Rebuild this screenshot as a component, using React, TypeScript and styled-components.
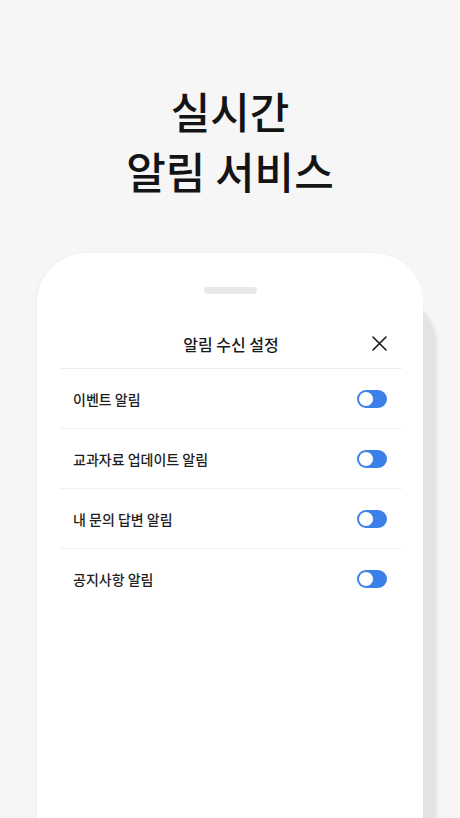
import React from 'react'
import styled, {createGlobalStyle} from 'styled-components'

const GlobalStyle = createGlobalStyle`
  html, body {
    margin: 0;
    padding: 0;
    background: #F6F6F6;
  }
  body {
    font-family: 'Noto Sans CJK KR', 'Noto Sans', sans-serif;
    overflow: hidden;
  }
`

const Background = styled.div`
  width: 460px;
  height: 818px;
  overflow: hidden;
  background: #F6F6F6;
  display: flex;
  flex-direction: column;
  align-items: center;
  padding-top: 80px;
  box-sizing: border-box;
`

const Headline = styled.h1`
  margin: 0;
  font-size: 43px;
  line-height: 60px;
  font-weight: 500;
  color: #141414;
  text-align: center;
  letter-spacing: 0;
`

const Phone = styled.div`
  margin-top: 53px;
  width: 386px;
  height: 640px;
  flex-shrink: 0;
  background: #FFFFFF;
  border-radius: 50px 50px 0 0;
  box-shadow: 14px 42px 3px #E3E3E3, -1px 0 4px rgba(0, 0, 0, 0.03);
  display: flex;
  flex-direction: column;
  align-items: center;
`

const Handle = styled.div`
  margin-top: 34px;
  width: 53px;
  height: 7px;
  border-radius: 4px;
  background: #E8E8E8;
`

const Sheet = styled.div`
  width: 342px;
  margin-top: 25px;
  margin-left: 2px;
  display: flex;
  flex-direction: column;
`

const Header = styled.div`
  height: 49px;
  display: grid;
  grid-template-columns: 1fr auto 1fr;
  align-items: center;
  padding-right: 15px;
  border-bottom: 1px solid #EEEEEE;
`

const SheetTitle = styled.div`
  grid-column: 2;
  font-size: 16px;
  font-weight: 500;
  color: #1A1A1A;
  padding-left: 15px;
`

const CloseButton = styled.button`
  justify-self: end;
  width: 16px;
  height: 16px;
  padding: 0;
  border: none;
  background: none;
  display: flex;
  align-items: center;
  justify-content: center;
`

const Row = styled.div<{last?: boolean}>`
  height: 59px;
  display: flex;
  align-items: center;
  justify-content: space-between;
  padding: 0 15px 0 13px;
  border-bottom: ${p => (p.last ? 'none' : '1px solid #F1F1F1')};
`

const Label = styled.span`
  font-size: 14px;
  font-weight: 500;
  color: #1E1E1E;
`

const Toggle = styled.div<{on?: boolean}>`
  position: relative;
  width: 30px;
  height: 18px;
  border-radius: 9px;
  background: ${p => (p.on ? '#3B80E8' : '#D9D9D9')};
`

const Knob = styled.div`
  position: absolute;
  top: 1px;
  left: 1px;
  width: 14px;
  height: 14px;
  border-radius: 50%;
  background: #FFFFFF;
  border: 1px solid #3B80E8;
`

const items = ['이벤트 알림', '교과자료 업데이트 알림', '내 문의 답변 알림', '공지사항 알림']

const App: React.FC = () => {
  return (
    <Background>
      <GlobalStyle/>
      <Headline>
        실시간<br/>알림 서비스
      </Headline>

      <Phone>
        <Handle/>
        <Sheet>
          <Header>
            <SheetTitle>알림 수신 설정</SheetTitle>
            <CloseButton aria-label="닫기">
              <svg width="15" height="15" viewBox="0 0 15 15">
                <path d="M1 1L14 14M14 1L1 14" stroke="#1A1A1A" strokeWidth="1.6" strokeLinecap="round"/>
              </svg>
            </CloseButton>
          </Header>

          {items.map((item, i) => (
            <Row key={item} last={i === items.length - 1}>
              <Label>{item}</Label>
              <Toggle on>
                <Knob/>
              </Toggle>
            </Row>
          ))}
        </Sheet>
      </Phone>
    </Background>
  )
}

export default App
